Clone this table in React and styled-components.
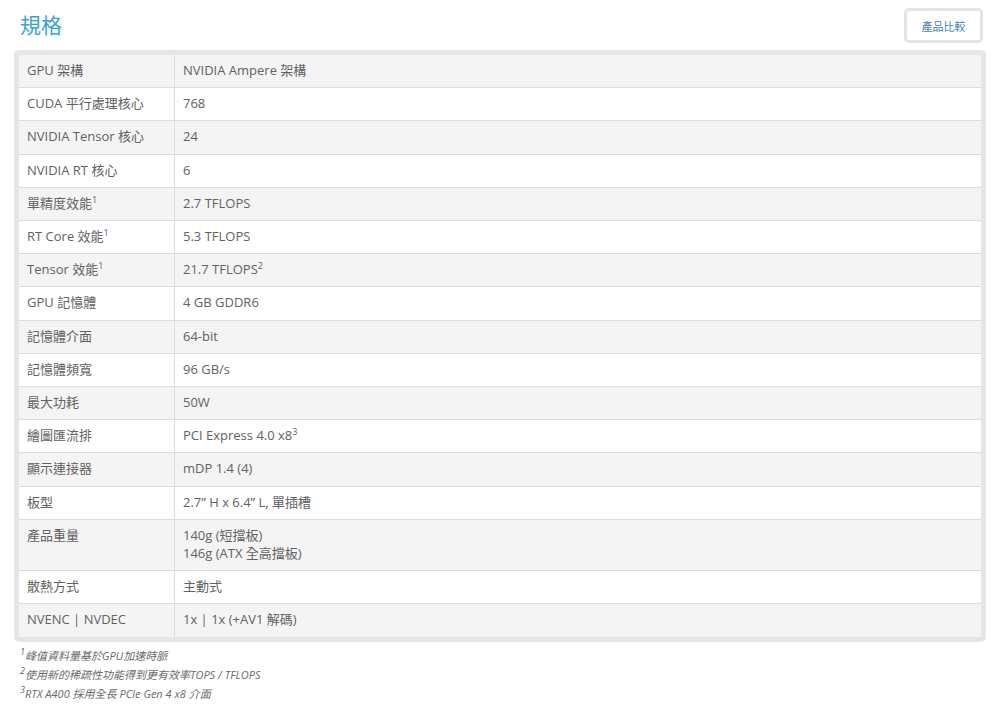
import React from "react";
import styled, { createGlobalStyle } from "styled-components";

const GlobalStyle = createGlobalStyle`
  body {
    margin: 0;
    background: #fff;
    font-family: "Open Sans", "Noto Sans CJK TC", sans-serif;
  }
`;

const Page = styled.div`
  width: 1000px;
  padding: 8px 14px 0 14px;
  box-sizing: border-box;
`;

const Header = styled.div`
  display: flex;
  justify-content: space-between;
  align-items: center;
  height: 36px;
  margin-bottom: 6px;
`;

const Title = styled.h2`
  margin: -4px 0 0 6px;
  font-size: 21px;
  font-weight: 400;
  color: #3ba2d2;
  font-family: "Noto Sans CJK TC", sans-serif;
`;

const CompareButton = styled.button`
  width: 79px;
  height: 35px;
  margin: -1px 3px 0 0;
  background: #fff;
  border: 3px solid #e4e4e4;
  border-radius: 5px;
  color: #3f7dc2;
  font-size: 11px;
  font-family: "Noto Sans CJK TC", sans-serif;
  cursor: pointer;
  padding: 0;
`;

const TableBox = styled.div`
  border: 5px solid #e6e6e6;
  border-radius: 5px;
`;

const Table = styled.table`
  width: 100%;
  border-collapse: collapse;
  font-size: 13px;
  color: #626262;
`;

const Row = styled.tr`
  background: ${({ $shade }) => ($shade ? "#f4f4f4" : "#fff")};
`;

const Cell = styled.td`
  border: 1px solid #dcdcdc;
  padding: 6px 8px 8px 8px;
  line-height: 18.2px;
  vertical-align: top;
  width: ${({ $label }) => ($label ? "139px" : "auto")};
  height: 18px;
  tr:first-child > & {
    border-top: none;
  }
  tr:last-child > & {
    border-bottom: none;
  }
  &:first-child {
    border-left: none;
  }
  &:last-child {
    border-right: none;
  }
`;

const Sup = styled.sup`
  font-size: 9px;
  line-height: 0;
  vertical-align: 5px;
`;

const Notes = styled.div`
  padding: 4px 0 0 6px;
  font-size: 11px;
  font-style: italic;
  color: #6a6a6a;
  line-height: 19px;
`;

const Note = styled.div``;

const specs = [
  ["GPU 架構", "NVIDIA Ampere 架構"],
  ["CUDA 平行處理核心", "768"],
  ["NVIDIA Tensor 核心", "24"],
  ["NVIDIA RT 核心", "6"],
  [<>單精度效能<Sup>1</Sup></>, "2.7 TFLOPS"],
  [<>RT Core 效能<Sup>1</Sup></>, "5.3 TFLOPS"],
  [<>Tensor 效能<Sup>1</Sup></>, <>21.7 TFLOPS<Sup>2</Sup></>],
  ["GPU 記憶體", "4 GB GDDR6"],
  ["記憶體介面", "64-bit"],
  ["記憶體頻寬", "96 GB/s"],
  ["最大功耗", "50W"],
  ["繪圖匯流排", <>PCI Express 4.0 x8<Sup>3</Sup></>],
  ["顯示連接器", "mDP 1.4 (4)"],
  ["板型", "2.7” H x 6.4” L, 單插槽"],
  ["產品重量", <>140g (短擋板)<br />146g (ATX 全高擋板)</>],
  ["散熱方式", "主動式"],
  ["NVENC | NVDEC", "1x | 1x (+AV1 解碼)"],
];

const App = () => {
  return (
    <Page>
      <GlobalStyle />
      <Header>
        <Title>規格</Title>
        <CompareButton>產品比較</CompareButton>
      </Header>
      <TableBox>
        <Table>
          <tbody>
            {specs.map(([label, value], i) => (
              <Row key={i} $shade={i % 2 === 0}>
                <Cell $label>{label}</Cell>
                <Cell>{value}</Cell>
              </Row>
            ))}
          </tbody>
        </Table>
      </TableBox>
      <Notes>
        <Note><Sup>1</Sup>峰值資料量基於GPU加速時脈</Note>
        <Note><Sup>2</Sup>使用新的稀疏性功能得到更有效率TOPS / TFLOPS</Note>
        <Note><Sup>3</Sup>RTX A400 採用全長 PCIe Gen 4 x8 介面</Note>
      </Notes>
    </Page>
  );
};

export default App;
